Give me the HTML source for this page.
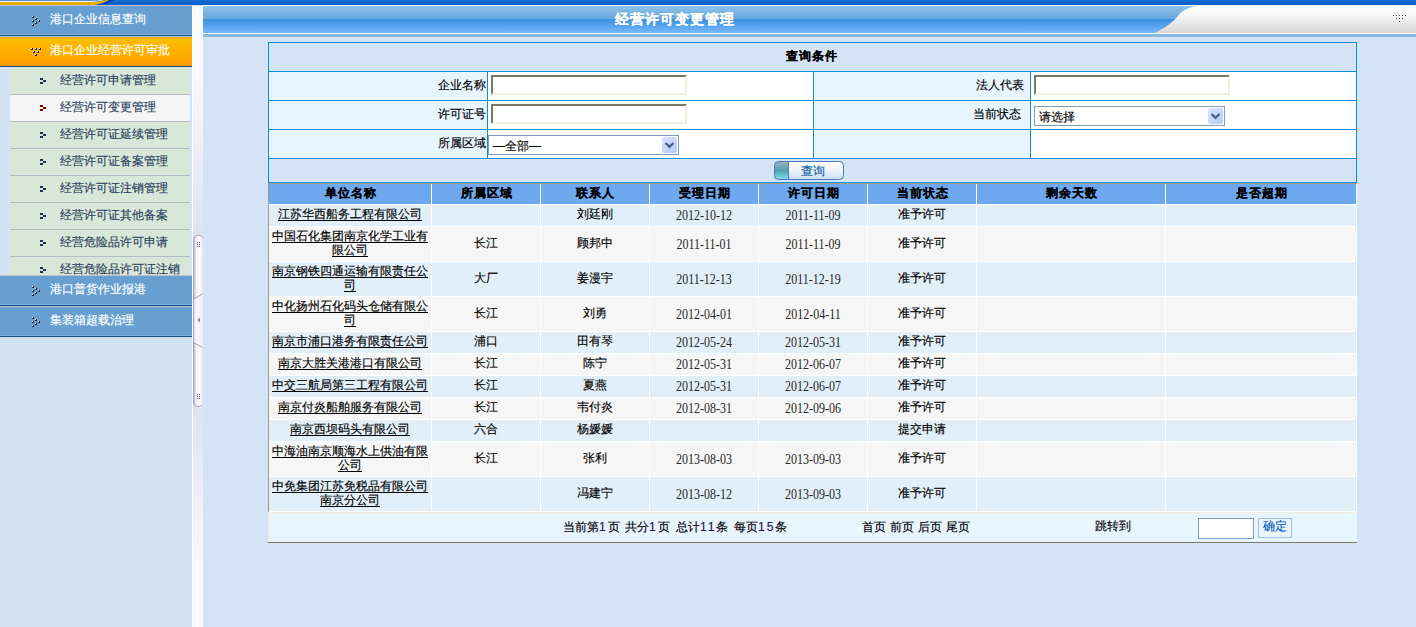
<!DOCTYPE html>
<html><head><meta charset="utf-8"><style>
*{margin:0;padding:0;box-sizing:border-box}
html,body{width:1416px;height:627px;overflow:hidden;background:#d4e3f5;font-family:'Liberation Sans', sans-serif;font-size:12px;color:#000}
.abs{position:absolute}
.t{position:absolute;white-space:nowrap;line-height:14px;-webkit-text-stroke:0.15px currentColor}
</style></head><body>

<div class="abs" style="left:0;top:0;width:1416px;height:5px;background:linear-gradient(#1470d2,#0a66cc 50%,#005ac6)"></div>
<svg class="abs" style="left:0;top:0" width="140" height="6" viewBox="0 0 140 6">
<rect x="0" y="0" width="96" height="1" fill="#4a90dc"/>
<rect x="0" y="1" width="90" height="1" fill="#ffffff"/>
<rect x="0" y="2" width="92" height="3" fill="#e0aa00"/>
<path d="M95 5 Q103 4 109 0 L116 0 Q108 4 100 5 Z" fill="#0046b0"/>
<path d="M90 2 Q99 2 106 0 L109 0 Q102 4 95 5 L90 5 Z" fill="#e8ae00"/>
<path d="M88 1 Q96 1 100 0 L104 0 Q98 1.7 92 2 L88 2 Z" fill="#ffffff"/>
<rect x="0" y="5" width="192" height="1" fill="#b4c4d4"/>
</svg>
<div class="abs" style="left:0;top:6px;width:192px;height:621px;background:#d3e3f4"></div>
<div class="abs" style="left:0;top:5px;width:192px;height:31px;background:#67a0d0"></div>
<div class="abs" style="left:0;top:5px;width:192px;height:1px;background:#b8c4cc"></div>
<div class="abs" style="left:0;top:34px;width:192px;height:1px;background:#7ab2e4"></div>
<div class="abs" style="left:0;top:35px;width:192px;height:1px;background:#1a4e84"></div>
<div class="t" style="left:50px;top:12px;color:#fff">港口企业信息查询</div>
<svg class="abs" style="left:28px;top:5px" width="16" height="30"><rect x="4" y="11" width="2" height="2" fill="#141c34"/><rect x="4" y="11" width="1" height="1" fill="#ffffff"/><rect x="7" y="13" width="2" height="2" fill="#141c34"/><rect x="7" y="13" width="1" height="1" fill="#ffffff"/><rect x="4" y="15" width="2" height="2" fill="#141c34"/><rect x="4" y="15" width="1" height="1" fill="#ffffff"/><rect x="10" y="15" width="2" height="2" fill="#141c34"/><rect x="10" y="15" width="1" height="1" fill="#ffffff"/><rect x="7" y="17" width="2" height="2" fill="#141c34"/><rect x="7" y="17" width="1" height="1" fill="#ffffff"/><rect x="4" y="19" width="2" height="2" fill="#141c34"/><rect x="4" y="19" width="1" height="1" fill="#ffffff"/></svg>
<div class="abs" style="left:0;top:36px;width:192px;height:31px;background:linear-gradient(#f9c200,#ffb000 50%,#ff9600)"></div>
<div class="abs" style="left:0;top:36px;width:192px;height:1px;background:#a8c0d0"></div>
<div class="abs" style="left:0;top:37px;width:192px;height:1px;background:#f0a800"></div>
<div class="abs" style="left:0;top:66px;width:192px;height:1px;background:#34506a"></div>
<div class="t" style="left:50px;top:43px;color:#fff">港口企业经营许可审批</div>
<svg class="abs" style="left:28px;top:36px" width="16" height="30"><rect x="3" y="12" width="2" height="2" fill="#141c34"/><rect x="3" y="12" width="1" height="1" fill="#ffffff"/><rect x="7" y="12" width="2" height="2" fill="#141c34"/><rect x="7" y="12" width="1" height="1" fill="#ffffff"/><rect x="11" y="12" width="2" height="2" fill="#141c34"/><rect x="11" y="12" width="1" height="1" fill="#ffffff"/><rect x="5" y="15" width="2" height="2" fill="#141c34"/><rect x="5" y="15" width="1" height="1" fill="#ffffff"/><rect x="9" y="15" width="2" height="2" fill="#141c34"/><rect x="9" y="15" width="1" height="1" fill="#ffffff"/><rect x="7" y="18" width="2" height="2" fill="#141c34"/><rect x="7" y="18" width="1" height="1" fill="#ffffff"/></svg>
<div class="abs" style="left:10px;top:67px;width:182px;height:208px;overflow:hidden">
<div class="abs" style="left:0;top:0px;width:180px;height:27px;background:#d9e7d8"></div>
<div class="abs" style="left:0;top:27px;width:180px;height:1px;background:#b4bcc4"></div>
<div class="abs" style="left:30px;top:11px;width:3px;height:2px;background:#1f3050"></div>
<div class="abs" style="left:33px;top:13px;width:3px;height:2px;background:#1f3050"></div>
<div class="abs" style="left:30px;top:15px;width:3px;height:2px;background:#1f3050"></div>
<div class="t" style="left:50px;top:6px;color:#2a4060">经营许可申请管理</div>
<div class="abs" style="left:0;top:28px;width:180px;height:26px;background:#f5f5f5"></div>
<div class="abs" style="left:0;top:54px;width:180px;height:1px;background:#b4bcc4"></div>
<div class="abs" style="left:30px;top:38px;width:3px;height:2px;background:#800000"></div>
<div class="abs" style="left:33px;top:40px;width:3px;height:2px;background:#800000"></div>
<div class="abs" style="left:30px;top:42px;width:3px;height:2px;background:#800000"></div>
<div class="t" style="left:50px;top:33px;color:#2a4060">经营许可变更管理</div>
<div class="abs" style="left:0;top:55px;width:180px;height:26px;background:#d9e7d8"></div>
<div class="abs" style="left:0;top:81px;width:180px;height:1px;background:#b4bcc4"></div>
<div class="abs" style="left:30px;top:65px;width:3px;height:2px;background:#1f3050"></div>
<div class="abs" style="left:33px;top:67px;width:3px;height:2px;background:#1f3050"></div>
<div class="abs" style="left:30px;top:69px;width:3px;height:2px;background:#1f3050"></div>
<div class="t" style="left:50px;top:60px;color:#2a4060">经营许可证延续管理</div>
<div class="abs" style="left:0;top:82px;width:180px;height:26px;background:#d9e7d8"></div>
<div class="abs" style="left:0;top:108px;width:180px;height:1px;background:#b4bcc4"></div>
<div class="abs" style="left:30px;top:92px;width:3px;height:2px;background:#1f3050"></div>
<div class="abs" style="left:33px;top:94px;width:3px;height:2px;background:#1f3050"></div>
<div class="abs" style="left:30px;top:96px;width:3px;height:2px;background:#1f3050"></div>
<div class="t" style="left:50px;top:87px;color:#2a4060">经营许可证备案管理</div>
<div class="abs" style="left:0;top:109px;width:180px;height:26px;background:#d9e7d8"></div>
<div class="abs" style="left:0;top:135px;width:180px;height:1px;background:#b4bcc4"></div>
<div class="abs" style="left:30px;top:119px;width:3px;height:2px;background:#1f3050"></div>
<div class="abs" style="left:33px;top:121px;width:3px;height:2px;background:#1f3050"></div>
<div class="abs" style="left:30px;top:123px;width:3px;height:2px;background:#1f3050"></div>
<div class="t" style="left:50px;top:114px;color:#2a4060">经营许可证注销管理</div>
<div class="abs" style="left:0;top:136px;width:180px;height:26px;background:#d9e7d8"></div>
<div class="abs" style="left:0;top:162px;width:180px;height:1px;background:#b4bcc4"></div>
<div class="abs" style="left:30px;top:146px;width:3px;height:2px;background:#1f3050"></div>
<div class="abs" style="left:33px;top:148px;width:3px;height:2px;background:#1f3050"></div>
<div class="abs" style="left:30px;top:150px;width:3px;height:2px;background:#1f3050"></div>
<div class="t" style="left:50px;top:141px;color:#2a4060">经营许可证其他备案</div>
<div class="abs" style="left:0;top:163px;width:180px;height:26px;background:#d9e7d8"></div>
<div class="abs" style="left:0;top:189px;width:180px;height:1px;background:#b4bcc4"></div>
<div class="abs" style="left:30px;top:173px;width:3px;height:2px;background:#1f3050"></div>
<div class="abs" style="left:33px;top:175px;width:3px;height:2px;background:#1f3050"></div>
<div class="abs" style="left:30px;top:177px;width:3px;height:2px;background:#1f3050"></div>
<div class="t" style="left:50px;top:168px;color:#2a4060">经营危险品许可申请</div>
<div class="abs" style="left:0;top:190px;width:180px;height:26px;background:#d9e7d8"></div>
<div class="abs" style="left:0;top:216px;width:180px;height:1px;background:#b4bcc4"></div>
<div class="abs" style="left:30px;top:200px;width:3px;height:2px;background:#1f3050"></div>
<div class="abs" style="left:33px;top:202px;width:3px;height:2px;background:#1f3050"></div>
<div class="abs" style="left:30px;top:204px;width:3px;height:2px;background:#1f3050"></div>
<div class="t" style="left:50px;top:195px;color:#2a4060">经营危险品许可证注销</div>
</div>
<div class="abs" style="left:0;top:275px;width:192px;height:31px;background:#67a0d0"></div>
<div class="abs" style="left:0;top:275px;width:192px;height:1px;background:#b8c4cc"></div>
<div class="abs" style="left:0;top:304px;width:192px;height:1px;background:#7ab2e4"></div>
<div class="abs" style="left:0;top:305px;width:192px;height:1px;background:#1a4e84"></div>
<div class="t" style="left:50px;top:282px;color:#fff">港口普货作业报港</div>
<svg class="abs" style="left:28px;top:275px" width="16" height="30"><rect x="4" y="11" width="2" height="2" fill="#141c34"/><rect x="4" y="11" width="1" height="1" fill="#ffffff"/><rect x="7" y="13" width="2" height="2" fill="#141c34"/><rect x="7" y="13" width="1" height="1" fill="#ffffff"/><rect x="4" y="15" width="2" height="2" fill="#141c34"/><rect x="4" y="15" width="1" height="1" fill="#ffffff"/><rect x="10" y="15" width="2" height="2" fill="#141c34"/><rect x="10" y="15" width="1" height="1" fill="#ffffff"/><rect x="7" y="17" width="2" height="2" fill="#141c34"/><rect x="7" y="17" width="1" height="1" fill="#ffffff"/><rect x="4" y="19" width="2" height="2" fill="#141c34"/><rect x="4" y="19" width="1" height="1" fill="#ffffff"/></svg>
<div class="abs" style="left:0;top:306px;width:192px;height:31px;background:#67a0d0"></div>
<div class="abs" style="left:0;top:306px;width:192px;height:1px;background:#b8c4cc"></div>
<div class="abs" style="left:0;top:335px;width:192px;height:1px;background:#7ab2e4"></div>
<div class="abs" style="left:0;top:336px;width:192px;height:1px;background:#1a4e84"></div>
<div class="t" style="left:50px;top:313px;color:#fff">集装箱超载治理</div>
<svg class="abs" style="left:28px;top:306px" width="16" height="30"><rect x="4" y="11" width="2" height="2" fill="#141c34"/><rect x="4" y="11" width="1" height="1" fill="#ffffff"/><rect x="7" y="13" width="2" height="2" fill="#141c34"/><rect x="7" y="13" width="1" height="1" fill="#ffffff"/><rect x="4" y="15" width="2" height="2" fill="#141c34"/><rect x="4" y="15" width="1" height="1" fill="#ffffff"/><rect x="10" y="15" width="2" height="2" fill="#141c34"/><rect x="10" y="15" width="1" height="1" fill="#ffffff"/><rect x="7" y="17" width="2" height="2" fill="#141c34"/><rect x="7" y="17" width="1" height="1" fill="#ffffff"/><rect x="4" y="19" width="2" height="2" fill="#141c34"/><rect x="4" y="19" width="1" height="1" fill="#ffffff"/></svg>
<div class="abs" style="left:192px;top:6px;width:1px;height:621px;background:#ffffff"></div>
<div class="abs" style="left:193px;top:6px;width:10px;height:621px;background:linear-gradient(#f8f9fc 0,#f8f9fc 70px,#dde3ec 230px,#dde3ec 400px,#f8f9fc 560px)"></div>
<svg class="abs" style="left:193px;top:233px" width="10" height="176" viewBox="0 0 10 176">
<defs><linearGradient id="hg" x1="0" x2="1" y1="0" y2="0"><stop offset="0" stop-color="#9e9ec4"/><stop offset="0.3" stop-color="#eeeef8"/><stop offset="0.65" stop-color="#ffffff"/><stop offset="1" stop-color="#e6e6f0"/></linearGradient>
<linearGradient id="hm" x1="0" x2="1" y1="0" y2="0"><stop offset="0" stop-color="#e4e4f0"/><stop offset="0.4" stop-color="#fafafd"/><stop offset="1" stop-color="#ececf4"/></linearGradient></defs>
<path d="M0 8 Q0 2 5 2 Q10 2 10 6 L10 173 Q10 176 5 173.5 Q0 172 0 170 Z" fill="url(#hg)"/>
<path d="M0.5 8 Q0.5 2.5 5 2.5 Q9.5 2.5 9.5 5" fill="none" stroke="#a0a0c0" stroke-width="1"/>
<line x1="0.5" y1="8" x2="0.5" y2="170" stroke="#a4a4c6" stroke-width="1"/>
<path d="M0.5 170 Q2 173.5 5 173.5 Q8 173.5 9.5 172" fill="none" stroke="#a0a0c0" stroke-width="1"/>
<path d="M1 66 Q5 63 10 61 L10 114.5 Q5 112 1 109.5 Z" fill="url(#hm)"/>
<path d="M0.5 66 Q5 63.5 9.5 61" fill="none" stroke="#9c9cbc" stroke-width="1"/>
<path d="M0.5 109.5 Q5 112 9.5 114.5" fill="none" stroke="#9c9cbc" stroke-width="1"/>
<g fill="#505074"><rect x="4" y="9" width="1" height="1"/><rect x="6" y="9" width="1" height="1"/><rect x="4" y="11" width="1" height="1"/><rect x="6" y="11" width="1" height="1"/><rect x="4" y="13" width="1" height="1"/><rect x="6" y="13" width="1" height="1"/>
<rect x="4" y="161" width="1" height="1"/><rect x="6" y="161" width="1" height="1"/><rect x="4" y="163" width="1" height="1"/><rect x="6" y="163" width="1" height="1"/><rect x="4" y="165" width="1" height="1"/><rect x="6" y="165" width="1" height="1"/></g>
<path d="M4 87 L7 84.5 L7 89.5 Z" fill="#8c8cb0"/>
</svg>
<div class="abs" style="left:203px;top:5px;width:1213px;height:1px;background:#fff"></div>
<div class="abs" style="left:203px;top:6px;width:1213px;height:27px;background:linear-gradient(#92c2e8 0,#64a6de 13px,#3a8ede 13px,#58a4ee 20px,#76b8fc 27px)"></div>
<div class="abs" style="left:203px;top:33px;width:1213px;height:1px;background:#fff"></div>
<div class="abs" style="left:203px;top:34px;width:1213px;height:3px;background:#88b9e2"></div>
<svg class="abs" style="left:1150px;top:6px" width="266" height="27" viewBox="0 0 266 27">
<defs><linearGradient id="wg" x1="0" x2="0" y1="0" y2="1"><stop offset="0" stop-color="#ffffff"/><stop offset="0.35" stop-color="#f6f6f6"/><stop offset="1" stop-color="#d8d8d8"/></linearGradient></defs>
<path d="M5 27 C16 21 22 17 27 11 C32 4 40 0 50 0 L266 0 L266 27 Z" fill="url(#wg)"/>
</svg>
<div class="t" style="left:615px;top:11px;color:#fff;font-size:14px;font-weight:bold;letter-spacing:1px;line-height:16px">经营许可变更管理</div>
<svg class="abs" style="left:1390px;top:12px" width="20" height="12"><rect x="3" y="3" width="1" height="1" fill="#404040"/><rect x="6" y="3" width="1" height="1" fill="#404040"/><rect x="9" y="3" width="1" height="1" fill="#404040"/><rect x="12" y="3" width="1" height="1" fill="#404040"/><rect x="15" y="3" width="1" height="1" fill="#404040"/><rect x="6" y="6" width="1" height="1" fill="#404040"/><rect x="9" y="6" width="1" height="1" fill="#404040"/><rect x="12" y="6" width="1" height="1" fill="#404040"/><rect x="9" y="9" width="1" height="1" fill="#404040"/></svg>
<div class="abs" style="left:268px;top:42px;width:1089px;height:141px;background:#0a90d8"></div>
<div class="abs" style="left:269px;top:43px;width:1087px;height:28px;background:#d4e3f5"></div>
<div class="abs" style="left:269px;top:72px;width:218px;height:28px;background:#e8f5fe"></div>
<div class="abs" style="left:488px;top:72px;width:325px;height:28px;background:#ffffff"></div>
<div class="abs" style="left:814px;top:72px;width:216px;height:28px;background:#e8f5fe"></div>
<div class="abs" style="left:1031px;top:72px;width:325px;height:28px;background:#ffffff"></div>
<div class="abs" style="left:269px;top:101px;width:218px;height:28px;background:#e8f5fe"></div>
<div class="abs" style="left:488px;top:101px;width:325px;height:28px;background:#ffffff"></div>
<div class="abs" style="left:814px;top:101px;width:216px;height:28px;background:#e8f5fe"></div>
<div class="abs" style="left:1031px;top:101px;width:325px;height:28px;background:#ffffff"></div>
<div class="abs" style="left:269px;top:130px;width:218px;height:28px;background:#e8f5fe"></div>
<div class="abs" style="left:488px;top:130px;width:325px;height:28px;background:#ffffff"></div>
<div class="abs" style="left:814px;top:130px;width:216px;height:28px;background:#e8f5fe"></div>
<div class="abs" style="left:1031px;top:130px;width:325px;height:28px;background:#ffffff"></div>
<div class="abs" style="left:269px;top:159px;width:1087px;height:23px;background:#d4e3f5"></div>
<div class="t" style="left:786px;top:49px;font-weight:bold;letter-spacing:1px">查询条件</div>
<div class="t" style="left:438px;top:78px">企业名称</div>
<div class="t" style="left:438px;top:107px">许可证号</div>
<div class="t" style="left:438px;top:136px">所属区域</div>
<div class="t" style="left:976px;top:78px">法人代表</div>
<div class="t" style="left:973px;top:107px">当前状态</div>
<div class="abs" style="left:491px;top:75px;width:196px;height:20px;background:#fff;border-style:solid;border-width:2px;border-color:#7b7868 #f2efe2 #f2efe2 #7b7868"></div>
<div class="abs" style="left:491px;top:104px;width:196px;height:20px;background:#fff;border-style:solid;border-width:2px;border-color:#7b7868 #f2efe2 #f2efe2 #7b7868"></div>
<div class="abs" style="left:1034px;top:75px;width:196px;height:20px;background:#fff;border-style:solid;border-width:2px;border-color:#7b7868 #f2efe2 #f2efe2 #7b7868"></div>
<div class="abs" style="left:1034px;top:106px;width:191px;height:20px;background:#fff;border:1px solid #7f9db9"></div>
<div class="t" style="left:1039px;top:110px">请选择</div>
<div class="abs" style="left:1208px;top:108px;width:15px;height:16px;border-radius:2px;background:linear-gradient(135deg,#d8e2fc,#b6cafa)"></div>
<svg class="abs" style="left:1208px;top:108px" width="15" height="16"><path d="M3.5 6 L7.5 9.8 L11.5 6" fill="none" stroke="#4d6185" stroke-width="2.3"/></svg>
<div class="abs" style="left:488px;top:135px;width:191px;height:20px;background:#fff;border:1px solid #7f9db9"></div>
<div class="t" style="left:493px;top:139px">—全部—</div>
<div class="abs" style="left:662px;top:137px;width:15px;height:16px;border-radius:2px;background:linear-gradient(135deg,#d8e2fc,#b6cafa)"></div>
<svg class="abs" style="left:662px;top:137px" width="15" height="16"><path d="M3.5 6 L7.5 9.8 L11.5 6" fill="none" stroke="#4d6185" stroke-width="2.3"/></svg>
<svg class="abs" style="left:774px;top:161px" width="70" height="19" viewBox="0 0 70 19">
<defs>
<linearGradient id="bl" x1="0" x2="0" y1="0" y2="1"><stop offset="0" stop-color="#aab4b4"/><stop offset="0.5" stop-color="#4aa2b2"/><stop offset="1" stop-color="#88e4ec"/></linearGradient>
<linearGradient id="br" x1="0" x2="0" y1="0" y2="1"><stop offset="0" stop-color="#ffffff"/><stop offset="0.5" stop-color="#eef4fb"/><stop offset="1" stop-color="#c8dcf2"/></linearGradient>
<clipPath id="bc"><rect x="0.5" y="0.5" width="69" height="18" rx="4"/></clipPath>
</defs>
<g clip-path="url(#bc)"><rect x="0" y="0" width="15" height="19" fill="url(#bl)"/><rect x="15" y="0" width="55" height="19" fill="url(#br)"/></g>
<line x1="14.5" y1="0.5" x2="14.5" y2="18.5" stroke="#4a78c4" stroke-width="1"/>
<rect x="0.5" y="0.5" width="69" height="18" rx="4" fill="none" stroke="#4a78c4" stroke-width="1"/>
</svg>
<div class="t" style="left:801px;top:164px;color:#0a5ca8">查询</div>
<div class="abs" style="left:268px;top:183px;width:1089px;height:329px;background:#ffffff"></div>
<div class="abs" style="left:268px;top:183px;width:1089px;height:1px;background:#a49c88"></div>
<div class="abs" style="left:268px;top:183px;width:1px;height:329px;background:#a49c88"></div>
<div class="abs" style="left:269px;top:184px;width:162px;height:20px;background:#6ea8ee"></div>
<div class="t" style="left:269px;width:162px;text-align:center;top:186px;font-weight:bold;letter-spacing:1px;text-indent:1px">单位名称</div>
<div class="abs" style="left:432px;top:184px;width:108px;height:20px;background:#6ea8ee"></div>
<div class="t" style="left:432px;width:108px;text-align:center;top:186px;font-weight:bold;letter-spacing:1px;text-indent:1px">所属区域</div>
<div class="abs" style="left:541px;top:184px;width:108px;height:20px;background:#6ea8ee"></div>
<div class="t" style="left:541px;width:108px;text-align:center;top:186px;font-weight:bold;letter-spacing:1px;text-indent:1px">联系人</div>
<div class="abs" style="left:650px;top:184px;width:108px;height:20px;background:#6ea8ee"></div>
<div class="t" style="left:650px;width:108px;text-align:center;top:186px;font-weight:bold;letter-spacing:1px;text-indent:1px">受理日期</div>
<div class="abs" style="left:759px;top:184px;width:108px;height:20px;background:#6ea8ee"></div>
<div class="t" style="left:759px;width:108px;text-align:center;top:186px;font-weight:bold;letter-spacing:1px;text-indent:1px">许可日期</div>
<div class="abs" style="left:868px;top:184px;width:108px;height:20px;background:#6ea8ee"></div>
<div class="t" style="left:868px;width:108px;text-align:center;top:186px;font-weight:bold;letter-spacing:1px;text-indent:1px">当前状态</div>
<div class="abs" style="left:977px;top:184px;width:188px;height:20px;background:#6ea8ee"></div>
<div class="t" style="left:977px;width:188px;text-align:center;top:186px;font-weight:bold;letter-spacing:1px;text-indent:1px">剩余天数</div>
<div class="abs" style="left:1166px;top:184px;width:190px;height:20px;background:#6ea8ee"></div>
<div class="t" style="left:1166px;width:190px;text-align:center;top:186px;font-weight:bold;letter-spacing:1px;text-indent:1px">是否超期</div>
<div class="abs" style="left:269px;top:205px;width:162px;height:21px;background:#e2eff8"></div>
<div class="abs" style="left:432px;top:205px;width:108px;height:21px;background:#e2eff8"></div>
<div class="abs" style="left:541px;top:205px;width:108px;height:21px;background:#e2eff8"></div>
<div class="abs" style="left:650px;top:205px;width:108px;height:21px;background:#e2eff8"></div>
<div class="abs" style="left:759px;top:205px;width:108px;height:21px;background:#e2eff8"></div>
<div class="abs" style="left:868px;top:205px;width:108px;height:21px;background:#e2eff8"></div>
<div class="abs" style="left:977px;top:205px;width:188px;height:21px;background:#e2eff8"></div>
<div class="abs" style="left:1166px;top:205px;width:190px;height:21px;background:#e2eff8"></div>
<div class="t" style="left:269px;width:162px;text-align:center;top:207px"><span style="text-decoration:underline;text-underline-offset:2px">江苏华西船务工程有限公司</span></div>
<div class="t" style="left:541px;width:108px;text-align:center;top:207px">刘廷刚</div>
<div class="t" style="left:868px;width:108px;text-align:center;top:207px">准予许可</div>
<div class="t" style="left:650px;width:108px;text-align:center;top:207px;font-family:'Liberation Serif',serif;color:#262626;-webkit-text-stroke:0"><span style="display:inline-block;transform:scaleY(1.18);transform-origin:50% 0">2012-10-12</span></div>
<div class="t" style="left:759px;width:108px;text-align:center;top:207px;font-family:'Liberation Serif',serif;color:#262626;-webkit-text-stroke:0"><span style="display:inline-block;transform:scaleY(1.18);transform-origin:50% 0">2011-11-09</span></div>
<div class="abs" style="left:269px;top:227px;width:162px;height:34px;background:#f6f6f6"></div>
<div class="abs" style="left:432px;top:227px;width:108px;height:34px;background:#f6f6f6"></div>
<div class="abs" style="left:541px;top:227px;width:108px;height:34px;background:#f6f6f6"></div>
<div class="abs" style="left:650px;top:227px;width:108px;height:34px;background:#f6f6f6"></div>
<div class="abs" style="left:759px;top:227px;width:108px;height:34px;background:#f6f6f6"></div>
<div class="abs" style="left:868px;top:227px;width:108px;height:34px;background:#f6f6f6"></div>
<div class="abs" style="left:977px;top:227px;width:188px;height:34px;background:#f6f6f6"></div>
<div class="abs" style="left:1166px;top:227px;width:190px;height:34px;background:#f6f6f6"></div>
<div class="t" style="left:269px;width:162px;text-align:center;top:229px"><span style="text-decoration:underline;text-underline-offset:2px">中国石化集团南京化学工业有</span></div>
<div class="t" style="left:269px;width:162px;text-align:center;top:243px"><span style="text-decoration:underline;text-underline-offset:2px">限公司</span></div>
<div class="t" style="left:432px;width:108px;text-align:center;top:236px">长江</div>
<div class="t" style="left:541px;width:108px;text-align:center;top:236px">顾邦中</div>
<div class="t" style="left:868px;width:108px;text-align:center;top:236px">准予许可</div>
<div class="t" style="left:650px;width:108px;text-align:center;top:236px;font-family:'Liberation Serif',serif;color:#262626;-webkit-text-stroke:0"><span style="display:inline-block;transform:scaleY(1.18);transform-origin:50% 0">2011-11-01</span></div>
<div class="t" style="left:759px;width:108px;text-align:center;top:236px;font-family:'Liberation Serif',serif;color:#262626;-webkit-text-stroke:0"><span style="display:inline-block;transform:scaleY(1.18);transform-origin:50% 0">2011-11-09</span></div>
<div class="abs" style="left:269px;top:262px;width:162px;height:34px;background:#e2eff8"></div>
<div class="abs" style="left:432px;top:262px;width:108px;height:34px;background:#e2eff8"></div>
<div class="abs" style="left:541px;top:262px;width:108px;height:34px;background:#e2eff8"></div>
<div class="abs" style="left:650px;top:262px;width:108px;height:34px;background:#e2eff8"></div>
<div class="abs" style="left:759px;top:262px;width:108px;height:34px;background:#e2eff8"></div>
<div class="abs" style="left:868px;top:262px;width:108px;height:34px;background:#e2eff8"></div>
<div class="abs" style="left:977px;top:262px;width:188px;height:34px;background:#e2eff8"></div>
<div class="abs" style="left:1166px;top:262px;width:190px;height:34px;background:#e2eff8"></div>
<div class="t" style="left:269px;width:162px;text-align:center;top:264px"><span style="text-decoration:underline;text-underline-offset:2px">南京钢铁四通运输有限责任公</span></div>
<div class="t" style="left:269px;width:162px;text-align:center;top:278px"><span style="text-decoration:underline;text-underline-offset:2px">司</span></div>
<div class="t" style="left:432px;width:108px;text-align:center;top:271px">大厂</div>
<div class="t" style="left:541px;width:108px;text-align:center;top:271px">姜漫宇</div>
<div class="t" style="left:868px;width:108px;text-align:center;top:271px">准予许可</div>
<div class="t" style="left:650px;width:108px;text-align:center;top:271px;font-family:'Liberation Serif',serif;color:#262626;-webkit-text-stroke:0"><span style="display:inline-block;transform:scaleY(1.18);transform-origin:50% 0">2011-12-13</span></div>
<div class="t" style="left:759px;width:108px;text-align:center;top:271px;font-family:'Liberation Serif',serif;color:#262626;-webkit-text-stroke:0"><span style="display:inline-block;transform:scaleY(1.18);transform-origin:50% 0">2011-12-19</span></div>
<div class="abs" style="left:269px;top:297px;width:162px;height:34px;background:#f6f6f6"></div>
<div class="abs" style="left:432px;top:297px;width:108px;height:34px;background:#f6f6f6"></div>
<div class="abs" style="left:541px;top:297px;width:108px;height:34px;background:#f6f6f6"></div>
<div class="abs" style="left:650px;top:297px;width:108px;height:34px;background:#f6f6f6"></div>
<div class="abs" style="left:759px;top:297px;width:108px;height:34px;background:#f6f6f6"></div>
<div class="abs" style="left:868px;top:297px;width:108px;height:34px;background:#f6f6f6"></div>
<div class="abs" style="left:977px;top:297px;width:188px;height:34px;background:#f6f6f6"></div>
<div class="abs" style="left:1166px;top:297px;width:190px;height:34px;background:#f6f6f6"></div>
<div class="t" style="left:269px;width:162px;text-align:center;top:299px"><span style="text-decoration:underline;text-underline-offset:2px">中化扬州石化码头仓储有限公</span></div>
<div class="t" style="left:269px;width:162px;text-align:center;top:313px"><span style="text-decoration:underline;text-underline-offset:2px">司</span></div>
<div class="t" style="left:432px;width:108px;text-align:center;top:306px">长江</div>
<div class="t" style="left:541px;width:108px;text-align:center;top:306px">刘勇</div>
<div class="t" style="left:868px;width:108px;text-align:center;top:306px">准予许可</div>
<div class="t" style="left:650px;width:108px;text-align:center;top:306px;font-family:'Liberation Serif',serif;color:#262626;-webkit-text-stroke:0"><span style="display:inline-block;transform:scaleY(1.18);transform-origin:50% 0">2012-04-01</span></div>
<div class="t" style="left:759px;width:108px;text-align:center;top:306px;font-family:'Liberation Serif',serif;color:#262626;-webkit-text-stroke:0"><span style="display:inline-block;transform:scaleY(1.18);transform-origin:50% 0">2012-04-11</span></div>
<div class="abs" style="left:269px;top:332px;width:162px;height:21px;background:#e2eff8"></div>
<div class="abs" style="left:432px;top:332px;width:108px;height:21px;background:#e2eff8"></div>
<div class="abs" style="left:541px;top:332px;width:108px;height:21px;background:#e2eff8"></div>
<div class="abs" style="left:650px;top:332px;width:108px;height:21px;background:#e2eff8"></div>
<div class="abs" style="left:759px;top:332px;width:108px;height:21px;background:#e2eff8"></div>
<div class="abs" style="left:868px;top:332px;width:108px;height:21px;background:#e2eff8"></div>
<div class="abs" style="left:977px;top:332px;width:188px;height:21px;background:#e2eff8"></div>
<div class="abs" style="left:1166px;top:332px;width:190px;height:21px;background:#e2eff8"></div>
<div class="t" style="left:269px;width:162px;text-align:center;top:334px"><span style="text-decoration:underline;text-underline-offset:2px">南京市浦口港务有限责任公司</span></div>
<div class="t" style="left:432px;width:108px;text-align:center;top:334px">浦口</div>
<div class="t" style="left:541px;width:108px;text-align:center;top:334px">田有琴</div>
<div class="t" style="left:868px;width:108px;text-align:center;top:334px">准予许可</div>
<div class="t" style="left:650px;width:108px;text-align:center;top:334px;font-family:'Liberation Serif',serif;color:#262626;-webkit-text-stroke:0"><span style="display:inline-block;transform:scaleY(1.18);transform-origin:50% 0">2012-05-24</span></div>
<div class="t" style="left:759px;width:108px;text-align:center;top:334px;font-family:'Liberation Serif',serif;color:#262626;-webkit-text-stroke:0"><span style="display:inline-block;transform:scaleY(1.18);transform-origin:50% 0">2012-05-31</span></div>
<div class="abs" style="left:269px;top:354px;width:162px;height:21px;background:#f6f6f6"></div>
<div class="abs" style="left:432px;top:354px;width:108px;height:21px;background:#f6f6f6"></div>
<div class="abs" style="left:541px;top:354px;width:108px;height:21px;background:#f6f6f6"></div>
<div class="abs" style="left:650px;top:354px;width:108px;height:21px;background:#f6f6f6"></div>
<div class="abs" style="left:759px;top:354px;width:108px;height:21px;background:#f6f6f6"></div>
<div class="abs" style="left:868px;top:354px;width:108px;height:21px;background:#f6f6f6"></div>
<div class="abs" style="left:977px;top:354px;width:188px;height:21px;background:#f6f6f6"></div>
<div class="abs" style="left:1166px;top:354px;width:190px;height:21px;background:#f6f6f6"></div>
<div class="t" style="left:269px;width:162px;text-align:center;top:356px"><span style="text-decoration:underline;text-underline-offset:2px">南京大胜关港港口有限公司</span></div>
<div class="t" style="left:432px;width:108px;text-align:center;top:356px">长江</div>
<div class="t" style="left:541px;width:108px;text-align:center;top:356px">陈宁</div>
<div class="t" style="left:868px;width:108px;text-align:center;top:356px">准予许可</div>
<div class="t" style="left:650px;width:108px;text-align:center;top:356px;font-family:'Liberation Serif',serif;color:#262626;-webkit-text-stroke:0"><span style="display:inline-block;transform:scaleY(1.18);transform-origin:50% 0">2012-05-31</span></div>
<div class="t" style="left:759px;width:108px;text-align:center;top:356px;font-family:'Liberation Serif',serif;color:#262626;-webkit-text-stroke:0"><span style="display:inline-block;transform:scaleY(1.18);transform-origin:50% 0">2012-06-07</span></div>
<div class="abs" style="left:269px;top:376px;width:162px;height:21px;background:#e2eff8"></div>
<div class="abs" style="left:432px;top:376px;width:108px;height:21px;background:#e2eff8"></div>
<div class="abs" style="left:541px;top:376px;width:108px;height:21px;background:#e2eff8"></div>
<div class="abs" style="left:650px;top:376px;width:108px;height:21px;background:#e2eff8"></div>
<div class="abs" style="left:759px;top:376px;width:108px;height:21px;background:#e2eff8"></div>
<div class="abs" style="left:868px;top:376px;width:108px;height:21px;background:#e2eff8"></div>
<div class="abs" style="left:977px;top:376px;width:188px;height:21px;background:#e2eff8"></div>
<div class="abs" style="left:1166px;top:376px;width:190px;height:21px;background:#e2eff8"></div>
<div class="t" style="left:269px;width:162px;text-align:center;top:378px"><span style="text-decoration:underline;text-underline-offset:2px">中交三航局第三工程有限公司</span></div>
<div class="t" style="left:432px;width:108px;text-align:center;top:378px">长江</div>
<div class="t" style="left:541px;width:108px;text-align:center;top:378px">夏燕</div>
<div class="t" style="left:868px;width:108px;text-align:center;top:378px">准予许可</div>
<div class="t" style="left:650px;width:108px;text-align:center;top:378px;font-family:'Liberation Serif',serif;color:#262626;-webkit-text-stroke:0"><span style="display:inline-block;transform:scaleY(1.18);transform-origin:50% 0">2012-05-31</span></div>
<div class="t" style="left:759px;width:108px;text-align:center;top:378px;font-family:'Liberation Serif',serif;color:#262626;-webkit-text-stroke:0"><span style="display:inline-block;transform:scaleY(1.18);transform-origin:50% 0">2012-06-07</span></div>
<div class="abs" style="left:269px;top:398px;width:162px;height:21px;background:#f6f6f6"></div>
<div class="abs" style="left:432px;top:398px;width:108px;height:21px;background:#f6f6f6"></div>
<div class="abs" style="left:541px;top:398px;width:108px;height:21px;background:#f6f6f6"></div>
<div class="abs" style="left:650px;top:398px;width:108px;height:21px;background:#f6f6f6"></div>
<div class="abs" style="left:759px;top:398px;width:108px;height:21px;background:#f6f6f6"></div>
<div class="abs" style="left:868px;top:398px;width:108px;height:21px;background:#f6f6f6"></div>
<div class="abs" style="left:977px;top:398px;width:188px;height:21px;background:#f6f6f6"></div>
<div class="abs" style="left:1166px;top:398px;width:190px;height:21px;background:#f6f6f6"></div>
<div class="t" style="left:269px;width:162px;text-align:center;top:400px"><span style="text-decoration:underline;text-underline-offset:2px">南京付炎船舶服务有限公司</span></div>
<div class="t" style="left:432px;width:108px;text-align:center;top:400px">长江</div>
<div class="t" style="left:541px;width:108px;text-align:center;top:400px">韦付炎</div>
<div class="t" style="left:868px;width:108px;text-align:center;top:400px">准予许可</div>
<div class="t" style="left:650px;width:108px;text-align:center;top:400px;font-family:'Liberation Serif',serif;color:#262626;-webkit-text-stroke:0"><span style="display:inline-block;transform:scaleY(1.18);transform-origin:50% 0">2012-08-31</span></div>
<div class="t" style="left:759px;width:108px;text-align:center;top:400px;font-family:'Liberation Serif',serif;color:#262626;-webkit-text-stroke:0"><span style="display:inline-block;transform:scaleY(1.18);transform-origin:50% 0">2012-09-06</span></div>
<div class="abs" style="left:269px;top:420px;width:162px;height:21px;background:#e2eff8"></div>
<div class="abs" style="left:432px;top:420px;width:108px;height:21px;background:#e2eff8"></div>
<div class="abs" style="left:541px;top:420px;width:108px;height:21px;background:#e2eff8"></div>
<div class="abs" style="left:650px;top:420px;width:108px;height:21px;background:#e2eff8"></div>
<div class="abs" style="left:759px;top:420px;width:108px;height:21px;background:#e2eff8"></div>
<div class="abs" style="left:868px;top:420px;width:108px;height:21px;background:#e2eff8"></div>
<div class="abs" style="left:977px;top:420px;width:188px;height:21px;background:#e2eff8"></div>
<div class="abs" style="left:1166px;top:420px;width:190px;height:21px;background:#e2eff8"></div>
<div class="t" style="left:269px;width:162px;text-align:center;top:422px"><span style="text-decoration:underline;text-underline-offset:2px">南京西坝码头有限公司</span></div>
<div class="t" style="left:432px;width:108px;text-align:center;top:422px">六合</div>
<div class="t" style="left:541px;width:108px;text-align:center;top:422px">杨媛媛</div>
<div class="t" style="left:868px;width:108px;text-align:center;top:422px">提交申请</div>
<div class="abs" style="left:269px;top:442px;width:162px;height:34px;background:#f6f6f6"></div>
<div class="abs" style="left:432px;top:442px;width:108px;height:34px;background:#f6f6f6"></div>
<div class="abs" style="left:541px;top:442px;width:108px;height:34px;background:#f6f6f6"></div>
<div class="abs" style="left:650px;top:442px;width:108px;height:34px;background:#f6f6f6"></div>
<div class="abs" style="left:759px;top:442px;width:108px;height:34px;background:#f6f6f6"></div>
<div class="abs" style="left:868px;top:442px;width:108px;height:34px;background:#f6f6f6"></div>
<div class="abs" style="left:977px;top:442px;width:188px;height:34px;background:#f6f6f6"></div>
<div class="abs" style="left:1166px;top:442px;width:190px;height:34px;background:#f6f6f6"></div>
<div class="t" style="left:269px;width:162px;text-align:center;top:444px"><span style="text-decoration:underline;text-underline-offset:2px">中海油南京顺海水上供油有限</span></div>
<div class="t" style="left:269px;width:162px;text-align:center;top:458px"><span style="text-decoration:underline;text-underline-offset:2px">公司</span></div>
<div class="t" style="left:432px;width:108px;text-align:center;top:451px">长江</div>
<div class="t" style="left:541px;width:108px;text-align:center;top:451px">张利</div>
<div class="t" style="left:868px;width:108px;text-align:center;top:451px">准予许可</div>
<div class="t" style="left:650px;width:108px;text-align:center;top:451px;font-family:'Liberation Serif',serif;color:#262626;-webkit-text-stroke:0"><span style="display:inline-block;transform:scaleY(1.18);transform-origin:50% 0">2013-08-03</span></div>
<div class="t" style="left:759px;width:108px;text-align:center;top:451px;font-family:'Liberation Serif',serif;color:#262626;-webkit-text-stroke:0"><span style="display:inline-block;transform:scaleY(1.18);transform-origin:50% 0">2013-09-03</span></div>
<div class="abs" style="left:269px;top:477px;width:162px;height:34px;background:#e2eff8"></div>
<div class="abs" style="left:432px;top:477px;width:108px;height:34px;background:#e2eff8"></div>
<div class="abs" style="left:541px;top:477px;width:108px;height:34px;background:#e2eff8"></div>
<div class="abs" style="left:650px;top:477px;width:108px;height:34px;background:#e2eff8"></div>
<div class="abs" style="left:759px;top:477px;width:108px;height:34px;background:#e2eff8"></div>
<div class="abs" style="left:868px;top:477px;width:108px;height:34px;background:#e2eff8"></div>
<div class="abs" style="left:977px;top:477px;width:188px;height:34px;background:#e2eff8"></div>
<div class="abs" style="left:1166px;top:477px;width:190px;height:34px;background:#e2eff8"></div>
<div class="t" style="left:269px;width:162px;text-align:center;top:479px"><span style="text-decoration:underline;text-underline-offset:2px">中免集团江苏免税品有限公司</span></div>
<div class="t" style="left:269px;width:162px;text-align:center;top:493px"><span style="text-decoration:underline;text-underline-offset:2px">南京分公司</span></div>
<div class="t" style="left:541px;width:108px;text-align:center;top:486px">冯建宁</div>
<div class="t" style="left:868px;width:108px;text-align:center;top:486px">准予许可</div>
<div class="t" style="left:650px;width:108px;text-align:center;top:486px;font-family:'Liberation Serif',serif;color:#262626;-webkit-text-stroke:0"><span style="display:inline-block;transform:scaleY(1.18);transform-origin:50% 0">2013-08-12</span></div>
<div class="t" style="left:759px;width:108px;text-align:center;top:486px;font-family:'Liberation Serif',serif;color:#262626;-webkit-text-stroke:0"><span style="display:inline-block;transform:scaleY(1.18);transform-origin:50% 0">2013-09-03</span></div>
<div class="abs" style="left:268px;top:512px;width:1089px;height:31px;background:#e8f5fe"></div>
<div class="abs" style="left:268px;top:512px;width:1089px;height:1px;background:#f2ecd8"></div>
<div class="abs" style="left:268px;top:512px;width:1px;height:31px;background:#f2ecd8"></div>
<div class="abs" style="left:268px;top:542px;width:1089px;height:1px;background:#7c786c"></div>
<div class="t" style="left:563px;top:520px">当前第<span style="color:#2c0a5a;letter-spacing:2px">1</span>页</div>
<div class="t" style="left:625px;top:520px">共分<span style="color:#2c0a5a;letter-spacing:2px">1</span>页</div>
<div class="t" style="left:676px;top:520px">总计<span style="color:#2c0a5a;letter-spacing:2px">11</span>条</div>
<div class="t" style="left:734px;top:520px">每页<span style="color:#2c0a5a;letter-spacing:2px">15</span>条</div>
<div class="t" style="left:862px;top:520px">首页</div>
<div class="t" style="left:890px;top:520px">前页</div>
<div class="t" style="left:918px;top:520px">后页</div>
<div class="t" style="left:946px;top:520px">尾页</div>
<div class="t" style="left:1095px;top:519px">跳转到</div>
<div class="abs" style="left:1198px;top:518px;width:56px;height:21px;background:#fff;border:1px solid #7f9db9"></div>
<div class="abs" style="left:1258px;top:518px;width:34px;height:20px;background:#eaf4fd;border:1px solid #9cc0e4"></div>
<div class="t" style="left:1263px;top:519px;color:#0a60c0">确定</div>
</body></html>
